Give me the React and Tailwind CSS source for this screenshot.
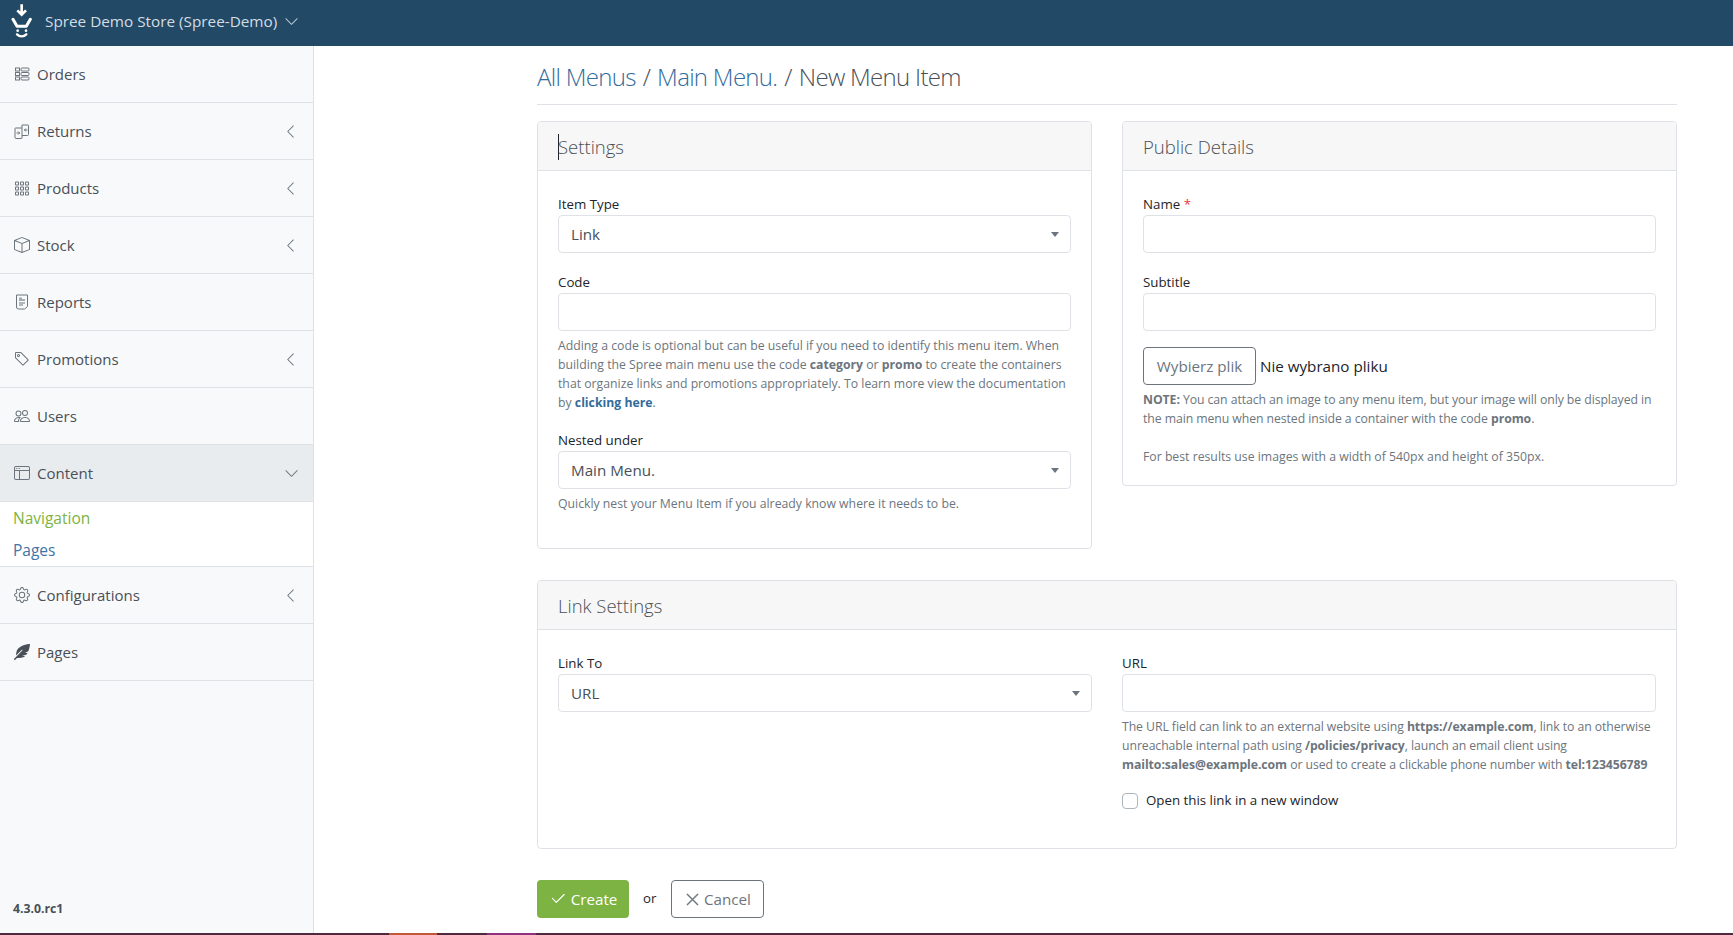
import React from "react";
import { BsBox, BsGrid3X3Gap, BsTag, BsPeople, BsWindowSidebar, BsGear, BsChevronLeft, BsChevronDown, BsCheck2, BsXLg } from "react-icons/bs";
import { FaFeatherAlt } from "react-icons/fa";

const OrdersIcon = () => (
  <svg width="16" height="16" viewBox="0 0 16 16" fill="none" stroke="currentColor" strokeWidth="1">
    <rect x="1.500" y="2" width="4" height="3" />
    <rect x="1.500" y="6.500" width="4" height="3" />
    <rect x="1.500" y="11" width="4" height="3" />
    <rect x="7" y="2" width="8" height="3" rx="1" />
    <rect x="7" y="6.500" width="8" height="3" rx="1" />
    <rect x="7" y="11" width="8" height="3" rx="1" />
  </svg>
);

const ReturnsIcon = () => (
  <svg width="17" height="17" viewBox="0 0 16 16" fill="none" stroke="currentColor" strokeWidth="1">
    <path d="M8 4.500H1.500a.5.5 0 0 0-.5.5v9a1 1 0 0 0 1 1h5.500a.5.5 0 0 0 .5-.5V1.500h6a.5.5 0 0 1 .5.5v9a1 1 0 0 1-1 1H8" />
    <path d="M2.500 9.500h3M4.200 8l1.500 1.500L4.200 11M13.500 6.500h-3M11.800 5l-1.500 1.500L11.800 8" />
  </svg>
);

const ReportsIcon = () => (
  <svg width="16" height="16" viewBox="0 0 16 16" fill="none" stroke="currentColor" strokeWidth="1">
    <path d="M2.500 1h11v11.500L10.500 15h-6a2 2 0 0 1-2-2z" />
    <path d="M5 3.500h3v3.500H5zM8 5h3v2H8z" fill="currentColor" fillOpacity="0.6" stroke="none" />
    <path d="M5 9h6M5 11h4" />
  </svg>
);

const LogoIcon = () => (
  <svg width="22" height="37" viewBox="30 9 66 111" fill="none" stroke="white">
    <path d="M65 13v30M52 31l13 13 13-13" strokeWidth="8" />
    <path d="M39 58l12 21h28l12-21" strokeWidth="9" strokeLinejoin="round" strokeLinecap="round" />
    <circle cx="53" cy="92" r="4" fill="white" stroke="none" />
    <circle cx="78" cy="92" r="4" fill="white" stroke="none" />
    <path d="M51 103c8 8 20 8 28 0" strokeWidth="7" strokeLinecap="round" />
  </svg>
);

const menu = [
  { label: "Orders", icon: <OrdersIcon /> },
  { label: "Returns", icon: <ReturnsIcon />, arrow: true },
  { label: "Products", icon: <BsGrid3X3Gap size={17} />, arrow: true },
  { label: "Stock", icon: <BsBox size={16} />, arrow: true },
  { label: "Reports", icon: <ReportsIcon /> },
  { label: "Promotions", icon: <BsTag size={16} />, arrow: true },
  { label: "Users", icon: <BsPeople size={16} /> },
];

const SideItem = ({ item, active }) => (
  <div className={`h-[57px] flex items-center pl-[14px] pr-[15px] border-b border-[#dee2e6] text-[#495057] ${active ? "bg-[#e9ecef]" : ""}`}>
    <span className="w-[16px] flex justify-center text-[#6c757d] mr-[7px]">{item.icon}</span>
    <span className="text-[15px] flex-1">{item.label}</span>
    {item.arrow && <BsChevronLeft size={15} className="text-[#6c757d]" />}
    {item.open && <BsChevronDown size={15} className="text-[#6c757d] -mr-[1px]" />}
  </div>
);

const Select = ({ value }) => (
  <div className="h-[38px] border border-[#dee2e6] rounded-[4px] bg-white flex items-center justify-between pl-[12px] pr-[11px] text-[15.200px] text-[#495057]">
    <span>{value}</span>
    <span className="w-0 h-0 border-x-[4px] border-x-transparent border-t-[5px] border-t-[#6c757d]" />
  </div>
);

const Input = () => <div className="h-[38px] border border-[#dee2e6] rounded-[4px] bg-white" />;

const Label = ({ children }) => <div className="text-[13.300px] leading-[21px] text-[#212529] pt-[1px]">{children}</div>;

const Hint = ({ children, className = "" }) => (
  <div className={`text-[12.250px] leading-[19px] text-[#6c757d] ${className}`}>{children}</div>
);

const Card = ({ title, className = "", bodyClass = "", children }) => (
  <div className={`border border-[#dee2e6] rounded-[4px] bg-white ${className}`}>
    <div className="h-[49px] bg-[#f7f7f7] border-b border-[#dee2e6] rounded-t-[4px] pl-[20px] pt-[2px] flex items-center text-[18.500px] font-light text-[#495057]">
      {title}
    </div>
    <div className={`px-[20px] ${bodyClass}`}>{children}</div>
  </div>
);

export default function App() {
  return (
    <div className="relative h-[935px] w-[1733px] overflow-hidden bg-white flex flex-col font-['Open_Sans',sans-serif]">
      {/* Top bar */}
      <header className="h-[46px] shrink-0 bg-[#224966] flex items-center pl-[10px] pb-[4px]">
        <LogoIcon />
        <span className="ml-[13px] text-[15.300px] text-[#d4dde4]">Spree Demo Store (Spree-Demo)</span>
        <BsChevronDown size={15} className="ml-[7px] text-[#c3cfd8]" />
      </header>

      <div className="flex flex-1 min-h-0">
        {/* Sidebar */}
        <aside className="w-[314px] shrink-0 bg-[#f8f9fa] border-r border-[#dee2e6] flex flex-col">
          {menu.map((item) => (
            <SideItem key={item.label} item={item} />
          ))}
          <SideItem item={{ label: "Content", icon: <BsWindowSidebar size={16} />, open: true }} active />
          <div className="h-[65px] bg-white border-b border-[#dee2e6] pl-[13px] text-[15.500px] leading-[32px]">
            <div className="text-[#7cb342]">Navigation</div>
            <div className="text-[#3f75a6]">Pages</div>
          </div>
          <SideItem item={{ label: "Configurations", icon: <BsGear size={16} />, arrow: true }} />
          <SideItem item={{ label: "Pages", icon: <FaFeatherAlt size={16} className="text-[#495057]" /> }} />
          <div className="mt-auto pl-[13px] pb-[17px] text-[12.250px] font-bold text-[#495057]">4.3.0.rc1</div>
        </aside>

        {/* Main */}
        <main className="flex-1 pl-[223px] pr-[56px]">
          <div className="h-[59px] pt-[3px] flex items-center border-b border-[#dee2e6] text-[24px] tracking-[-0.7px] font-light text-[#495057]">
            <span className="text-[#336b9c]">All Menus</span>
            <span className="mx-[7px]">/</span>
            <span className="text-[#336b9c]">Main Menu.</span>
            <span className="mx-[7px]">/</span>
            <span>New Menu Item</span>
          </div>

          <div className="mt-[16px] flex items-start gap-[30px]">
            {/* Settings */}
            <Card
              title={
                <>
                  <span className="w-px h-[26px] bg-[#212529] -mr-px" />
                  Settings
                </>
              }
              className="flex-1 h-[428px]"
              bodyClass="pt-[22px]"
            >
              <Label>Item Type</Label>
              <Select value="Link" />
              <div className="mt-[18px]">
                <Label>Code</Label>
                <Input />
                <Hint className="mt-[5px]">
                  Adding a code is optional but can be useful if you need to identify this menu item. When building the Spree main menu use the code <b>category</b> or <b>promo</b> to create the containers that organize links and promotions appropriately. To learn more view the documentation by <b className="text-[#336b9c]">clicking here</b>.
                </Hint>
              </div>
              <div className="mt-[17px]">
                <Label>Nested under</Label>
                <Select value="Main Menu." />
                <Hint className="mt-[5px]">Quickly nest your Menu Item if you already know where it needs to be.</Hint>
              </div>
            </Card>

            {/* Public details */}
            <Card title="Public Details" className="flex-1 h-[365px]" bodyClass="pt-[22px]">
              <Label>
                Name <span className="text-[#e53935]">*</span>
              </Label>
              <Input />
              <div className="mt-[18px]">
                <Label>Subtitle</Label>
                <Input />
              </div>
              <div className="mt-[16px] flex items-center">
                <div className="h-[38px] w-[113px] border border-[#6c757d] rounded-[4px] flex items-center justify-center text-[15.200px] text-[#6c757d]">Wybierz plik</div>
                <span className="ml-[4px] text-[15.200px] text-[#212529]">Nie wybrano pliku</span>
              </div>
              <Hint className="mt-[5px] tracking-[-0.07px]">
                <b>NOTE:</b> You can attach an image to any menu item, but your image will only be displayed in the main menu when nested inside a container with the code <b>promo</b>.
              </Hint>
              <Hint className="mt-[19px]">For best results use images with a width of 540px and height of 350px.</Hint>
            </Card>
          </div>

          {/* Link settings */}
          <Card title="Link Settings" className="mt-[31px] h-[269px]" bodyClass="pt-[22px] flex gap-[30px]">
            <div className="w-[534px]">
              <Label>Link To</Label>
              <Select value="URL" />
            </div>
            <div className="flex-1">
              <Label>URL</Label>
              <Input />
              <Hint className="mt-[5px] tracking-[-0.07px]">
                The URL field can link to an external website using <b>https://example.com</b>, link to an otherwise unreachable internal path using <b>/policies/privacy</b>, launch an email client using <b>mailto:sales@example.com</b> or used to create a clickable phone number with <b>tel:123456789</b>
              </Hint>
              <div className="mt-[17px] flex items-center text-[13.300px] text-[#212529]">
                <span className="w-[16px] h-[16px] border border-[#adb5bd] rounded-[4px] mr-[8px]" />
                Open this link in a new window
              </div>
            </div>
          </Card>

          {/* Actions */}
          <div className="mt-[31px] flex items-center">
            <div className="h-[38px] w-[92px] rounded-[4px] bg-[#7cb342] text-white flex items-center justify-center text-[15.200px]">
              <BsCheck2 size={18} className="mr-[4px]" />
              Create
            </div>
            <span className="ml-[14px] mr-[15px] text-[13.300px] text-[#212529]">or</span>
            <div className="h-[38px] w-[93px] rounded-[4px] border border-[#6c757d] text-[#6c757d] flex items-center justify-center text-[15.200px]">
              <BsXLg size={15} stroke="currentColor" strokeWidth={0.6} className="mr-[4px]" />
              Cancel
            </div>
          </div>
        </main>
      </div>

      {/* Strip left at the bottom of the window */}
      <div className="absolute bottom-0 left-0 right-0 h-[2px] flex bg-[#4f2a3f]">
        <div className="ml-[389px] w-[48px] bg-[#c4593a]" />
        <div className="ml-[50px] w-[49px] bg-[#8f3380]" />
      </div>
    </div>
  );
}
